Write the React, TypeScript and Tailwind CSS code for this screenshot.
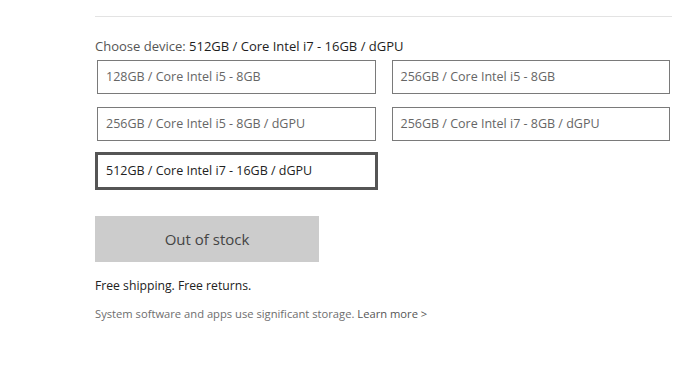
import { useState } from 'react'

const options = [
  '128GB / Core Intel i5 - 8GB',
  '256GB / Core Intel i5 - 8GB',
  '256GB / Core Intel i5 - 8GB / dGPU',
  '256GB / Core Intel i7 - 8GB / dGPU',
  '512GB / Core Intel i7 - 16GB / dGPU',
]

export default function App() {
  const [selected, setSelected] = useState(options[4])

  return (
    <div className="min-h-[387px] bg-white font-['Open_Sans','Noto_Sans',sans-serif]">
      <div className="ml-[95px] w-[577px] pt-4">
        <div className="border-t border-[#e3e3e3]" />

        <div className="mt-5 text-[13px] leading-[18px] text-[#555]">
          Choose device: <span className="text-[#1e1e1e]">{selected}</span>
        </div>

        <div className="mt-[3px] grid grid-cols-2 gap-x-3 gap-y-[9px]">
          {options.map(o => {
            const isSelected = o === selected
            return (
              <button
                key={o}
                onClick={() => setSelected(o)}
                className={
                  isSelected
                    ? 'flex h-[38px] items-center border-[3px] border-[#555] bg-white px-2 text-left text-[12.5px] text-[#222]'
                    : 'm-[2px] flex h-[34px] items-center border border-[#7a7a7a] bg-white px-2 text-left text-[12.5px] text-[#666]'
                }
              >
                {o}
              </button>
            )
          })}
        </div>

        <button
          disabled
          className="mt-[26px] flex h-[46px] w-[224px] items-center justify-center bg-[#cccccc] text-[15px] text-[#444]"
        >
          Out of stock
        </button>

        <p className="mt-[15px] text-[12.2px] leading-[18px] text-[#222]">Free shipping. Free returns.</p>

        <p className="mt-[11px] text-[11.2px] leading-4 text-[#6e6e6e]">
          System software and apps use significant storage.{' '}
          <a href="#" className="text-[#555]">Learn more &gt;</a>
        </p>
      </div>
    </div>
  )
}
